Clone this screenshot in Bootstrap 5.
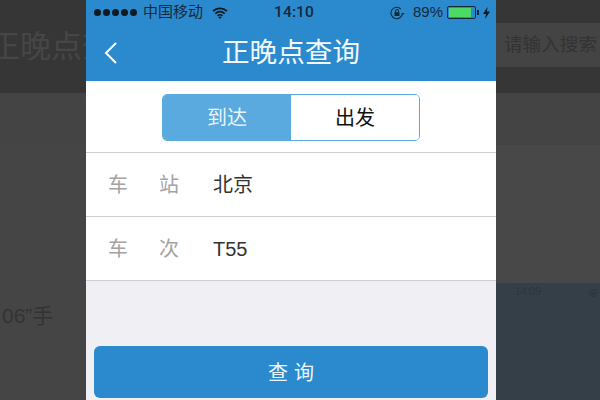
<!DOCTYPE html>
<html lang="zh">
<head>
<meta charset="utf-8">
<title>正晚点查询</title>
<link href="https://cdn.jsdelivr.net/npm/bootstrap@5.3.0/dist/css/bootstrap.min.css" rel="stylesheet">
<style>
html,body{width:600px;height:400px;overflow:hidden;margin:0}
body{font-family:"Liberation Sans","Noto Sans CJK SC",sans-serif;background:#454545}
.stage{width:600px;height:400px}
.side-l{width:86px;flex:none;overflow:hidden}
.side-r{width:104px;flex:none;overflow:hidden}
.phone{width:410px;height:400px;flex:none;background:#efeff4}
.band-a{height:93px;background:#363636}
.band-b{height:52px;background:#444}
.big-txt{font-size:31px;line-height:93px;color:#464646;white-space:nowrap;margin-left:-11px}
.hand{height:255px;background:#454545;color:#333;font-size:21px;line-height:30px;padding-top:156px;padding-left:2px;white-space:nowrap}
.r-top{height:23px;background:#363636}
.r-input{height:44px;background:#444;color:#333;font-size:18.6px;line-height:43px;padding-left:8px;white-space:nowrap}
.r-mid{height:26px;background:#363636}
.r-c{height:138px;background:#484848}
.r-shot{height:117px;background:#353f47;color:#2d353c;font-size:10.5px;line-height:12px;padding:2px 3px 0 19px}
.blue-top{height:81px;background:#2b8acd}
.sbar{height:25px;padding:0 6px 0 8px;font-size:15px;color:#16293a;display:grid;grid-template-columns:1fr auto 1fr;align-items:center}
.clock{font-family:Roboto,"Liberation Sans",sans-serif;font-size:15.5px;font-weight:500;color:#16293a;margin-left:4px;letter-spacing:.1px}
.dots{gap:2px}
.dot{width:7px;height:7px;border-radius:50%;background:#0e1a24;display:block}
.carrier{font-size:15px;margin-left:6px;margin-right:9px}
.batt{width:29px;height:13px;border:1px solid #16293a;border-radius:2px;padding:1px;margin:0 1px 0 4px}
.batt-fill{width:89%;height:100%;background:#4cd964}
.batt-tip{width:2px;height:5px;background:#16293a;margin-right:4px}
.nbar{height:56px;padding:0 32px 0 17px;color:#fff}
.ttl{font-size:27.6px;line-height:50px;color:#f2f8fc}
.seg-wrap{height:72px;background:#fff;padding:13px 0 0 76px;border-bottom:1px solid #cfcfd2}
.seg{width:258px;height:47px;border:1px solid #5aaadf;border-radius:5px;overflow:hidden;font-size:20px}
.seg-on{width:129px;background:#5aaae0;color:#e9f4fb}
.seg-off{width:129px;background:#fff;color:#111}
.frow{height:64px;background:#fff;border-bottom:1px solid #cfcfd2;padding-left:22px;font-size:20px}
.flabel{width:105px;color:#a3a3a3;letter-spacing:0}
.flabel span+span{margin-left:31px}
.fval{color:#333}
.btn-zone{height:119px;padding:65px 8px 2px}
.query-btn{height:52px;width:394px;background:#2b8acd;color:#eef6fb;font-size:20px;letter-spacing:6px;border-radius:6px;border:0;padding:2px 0 0 6px}
.query-btn:hover{background:#2b8acd;color:#eef6fb}
</style>
</head>
<body>
<div class="stage d-flex">
  <div class="side-l">
    <div class="band-a"><div class="big-txt">正晚点查询</div></div>
    <div class="band-b"></div>
    <div class="hand">06”手</div>
  </div>
  <main class="phone d-flex flex-column">
    <header class="blue-top">
      <div class="sbar">
        <div class="d-flex align-items-center">
          <span class="d-flex dots"><i class="dot"></i><i class="dot"></i><i class="dot"></i><i class="dot"></i><i class="dot"></i></span>
          <span class="carrier">中国移动</span>
          <svg width="16" height="12" viewBox="0 0 16 12" fill="none" stroke="#0e1a24" stroke-width="1.7"><path d="M1 4.200a10 10 0 0 1 14 0M3.300 6.600a6.700 6.700 0 0 1 9.400 0M5.600 8.800a3.400 3.400 0 0 1 4.800 0"/><path d="M8 12l-1.600-1.700a2.200 2.200 0 0 1 3.200 0z" fill="#0e1a24" stroke="none"/></svg>
        </div>
        <span class="clock">14:10</span>
        <div class="d-flex align-items-center justify-content-end">
          <svg width="15" height="14" viewBox="0 0 15 14" fill="none" stroke="#16293a" stroke-width="1.100" class="me-2"><path d="M12.400 7a5.700 5.700 0 1 1-1.600-4"/><path d="M11.500 7h3L13 9z" fill="#16293a" stroke="none"/><rect x="4.500" y="6.200" width="5" height="3.800" fill="#16293a" stroke="none"/><path d="M5.500 6.200V5a1.500 1.500 0 0 1 3 0v1.200"/></svg>
          <span>89%</span>
          <div class="batt"><div class="batt-fill"></div></div>
          <div class="batt-tip"></div>
          <svg width="7" height="12" viewBox="0 0 7 12"><path d="M4.500 0L0 7h3L2 12l5-7.500H4z" fill="#0e1a24"/></svg>
        </div>
      </div>
      <nav class="nbar d-flex align-items-center">
        <svg width="15" height="24" viewBox="0 0 15 24" fill="none" stroke="#fff" stroke-width="2"><path d="M13 2L3 12l10 10"/></svg>
        <div class="ttl flex-grow-1 text-center">正晚点查询</div>
      </nav>
    </header>
    <section class="seg-wrap">
      <div class="seg d-flex">
        <div class="seg-on d-flex align-items-center justify-content-center">到达</div>
        <div class="seg-off d-flex align-items-center justify-content-center">出发</div>
      </div>
    </section>
    <div class="frow d-flex align-items-center">
      <div class="flabel"><span>车</span><span>站</span></div>
      <div class="fval">北京</div>
    </div>
    <div class="frow d-flex align-items-center">
      <div class="flabel"><span>车</span><span>次</span></div>
      <div class="fval">T55</div>
    </div>
    <div class="btn-zone">
      <button type="button" class="btn query-btn">查询</button>
    </div>
  </main>
  <div class="side-r">
    <div class="r-top"></div>
    <div class="r-input">请输入搜索</div>
    <div class="r-mid"></div>
    <div class="band-b"></div>
    <div class="r-c"></div>
    <div class="r-shot d-flex justify-content-between align-items-start"><span>14:09</span><svg class="mt-1" width="8" height="8" viewBox="0 0 8 8"><circle cx="4" cy="4" r="3.500" fill="none" stroke="#2d353c"/><rect x="2.500" y="3" width="3" height="2.500" fill="#2d353c"/></svg></div>
  </div>
</div>
<script src="https://cdn.jsdelivr.net/npm/bootstrap@5.3.0/dist/js/bootstrap.bundle.min.js"></script>
</body>
</html>
